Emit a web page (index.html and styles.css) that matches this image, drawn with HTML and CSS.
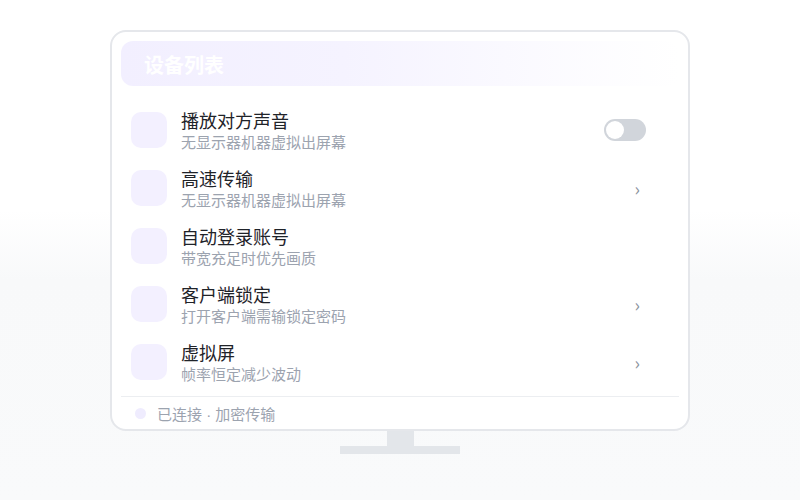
FILE: index.html
```html
<!DOCTYPE html>
<html lang="zh">
<head>
<meta charset="utf-8">
<link rel="stylesheet" href="styles.css">
</head>
<body>
<div class="stage">
  <div class="monitor">
    <div class="screen">
      <div class="header">设备列表</div>
      <div class="list">
        <div class="row">
          <div class="icon"></div>
          <div class="text"><div class="title">播放对方声音</div><div class="sub">无显示器机器虚拟出屏幕</div></div>
          <div class="toggle"><div class="knob"></div></div>
        </div>
        <div class="row">
          <div class="icon"></div>
          <div class="text"><div class="title">高速传输</div><div class="sub">无显示器机器虚拟出屏幕</div></div>
          <div class="chev">›</div>
        </div>
        <div class="row">
          <div class="icon"></div>
          <div class="text"><div class="title">自动登录账号</div><div class="sub">带宽充足时优先画质</div></div>
        </div>
        <div class="row">
          <div class="icon"></div>
          <div class="text"><div class="title">客户端锁定</div><div class="sub">打开客户端需输锁定密码</div></div>
          <div class="chev">›</div>
        </div>
        <div class="row">
          <div class="icon"></div>
          <div class="text"><div class="title">虚拟屏</div><div class="sub">帧率恒定减少波动</div></div>
          <div class="chev">›</div>
        </div>
      </div>
      <div class="footer"><span class="dot"></span><span>已连接<span class="sep"> · </span>加密传输</span></div>
    </div>
    <div class="neck"></div>
    <div class="base"></div>
  </div>
</div>
</body>
</html>
```
FILE: styles.css
```css
* { box-sizing: border-box; }
html, body { margin: 0; padding: 0; }
body {
  width: 800px;
  height: 500px;
  background: linear-gradient(to bottom, #ffffff 0%, #ffffff 42%, #f8f9fa 56%, #f9fafb 100%);
  font-family: "Noto Sans CJK SC", "Noto Sans", sans-serif;
}
.stage {
  display: flex;
  justify-content: center;
  padding-top: 30px;
}
.monitor {
  width: 580px;
  display: flex;
  flex-direction: column;
  align-items: center;
}
.screen {
  width: 580px;
  height: 401px;
  background: #ffffff;
  border: 2px solid #e5e7eb;
  border-radius: 16px;
  padding: 9px 9px 0 9px;
  display: flex;
  flex-direction: column;
}
.header {
  height: 45px;
  border-radius: 12px;
  background: linear-gradient(to right, #f2efff 0%, #f5f3ff 40%, rgba(250,249,255,0.6) 80%, rgba(255,255,255,0) 100%);
  color: #ffffff;
  font-size: 20px;
  font-weight: 700;
  line-height: 47px;
  padding-left: 23px;
}
.list {
  margin-top: 15px;
  display: flex;
  flex-direction: column;
}
.row {
  height: 58px;
  display: flex;
  align-items: center;
  padding-left: 10px;
}
.icon {
  width: 36px;
  height: 36px;
  border-radius: 10px;
  background: #f3f0ff;
  flex: none;
}
.text {
  margin-left: 14px;
  flex: 1;
  display: flex;
  flex-direction: column;
}
.title {
  font-size: 18px;
  color: #1f2329;
  line-height: 23px;
}
.sub {
  font-size: 15px;
  color: #9ca3af;
  line-height: 20px;
}
.toggle {
  width: 42px;
  height: 22px;
  border-radius: 11px;
  background: #d1d5db;
  margin-right: 33px;
  padding: 2px;
  display: flex;
}
.knob {
  width: 18px;
  height: 18px;
  border-radius: 50%;
  background: #ffffff;
}
.chev {
  font-size: 18px;
  color: #8b929c;
  margin-right: 39px;
  line-height: 20px;
}
.footer {
  margin-top: 5px;
  border-top: 1px solid #eceef1;
  height: 33px;
  display: flex;
  align-items: center;
  padding-left: 14px;
  font-size: 15px;
  color: #9ca3af;
}
.sep {
  font-family: "Liberation Sans", sans-serif;
}
.dot {
  width: 11px;
  height: 11px;
  border-radius: 50%;
  background: #efecfe;
  margin-right: 11px;
}
.neck {
  width: 27px;
  height: 15px;
  background: #e3e6ea;
}
.base {
  width: 120px;
  height: 8px;
  background: #e3e6ea;
}
```
